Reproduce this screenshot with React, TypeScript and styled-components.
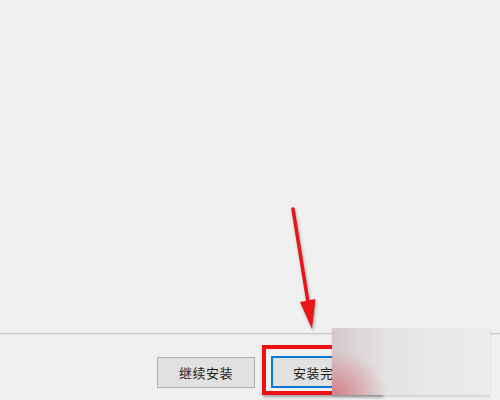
import React from 'react';
import styled, { createGlobalStyle } from 'styled-components';

const GlobalStyle = createGlobalStyle`
  html, body {
    margin: 0;
    padding: 0;
    background: #f0f0f0;
  }
  body {
    font-family: "Microsoft YaHei", "Noto Sans CJK SC", "Noto Sans", sans-serif;
  }
`;

const Dialog = styled.div`
  position: relative;
  width: 500px;
  height: 400px;
  display: flex;
  flex-direction: column;
  background: #f0f0f0;
  overflow: hidden;
`;

const Body = styled.div`
  height: 333px;
`;

const Divider = styled.div`
  height: 1px;
  background: #c9c9c9;
  border-bottom: 1px solid #e4e4e4;
`;

const Footer = styled.div`
  display: flex;
  align-items: flex-start;
  gap: 16px;
  padding: 22px 0 0 157px;
`;

const Button = styled.button<{ $primary?: boolean }>`
  box-sizing: border-box;
  width: 98px;
  height: ${({ $primary }) => ($primary ? '32px' : '31px')};
  margin-top: ${({ $primary }) => ($primary ? '-1px' : '0')};
  background: #e1e1e1;
  border: ${({ $primary }) => ($primary ? '2px solid #0a78d4' : '1px solid #adadad')};
  color: #1c1c1c;
  font-family: inherit;
  font-size: 13px;
  letter-spacing: 0.5px;
  padding: 0;
`;

// annotation layer: red highlight box, arrow, blurred patch
const Highlight = styled.div`
  position: absolute;
  left: 262px;
  top: 345px;
  width: 120px;
  height: 50px;
  box-sizing: border-box;
  border: 4px solid #ee1111;
  box-shadow: 1px 2px 3px rgba(0, 0, 0, 0.35);
`;

const Arrow = styled.svg`
  position: absolute;
  left: 0;
  top: 0;
  width: 500px;
  height: 400px;
  pointer-events: none;
  filter: drop-shadow(1px 2px 1.5px rgba(0, 0, 0, 0.3));
`;

const Smudge = styled.div`
  position: absolute;
  left: 332px;
  top: 328px;
  width: 158px;
  height: 67px;
  background:
    radial-gradient(ellipse 55px 45px at 0% 100%, rgba(208, 110, 120, 0.8), rgba(208, 110, 120, 0) 100%),
    linear-gradient(to right, #d5c8cb 0%, #ddd4d6 15%, #e4e2e2 35%, #e8e8e8 60%, #ececec 100%);
  box-shadow: 0 2px 2px rgba(0, 0, 0, 0.12);
`;

export default function App() {
  return (
    <>
      <GlobalStyle />
      <Dialog>
        <Body />
        <Divider />
        <Footer>
          <Button>继续安装</Button>
          <Button $primary>安装完成</Button>
        </Footer>
        <Highlight />
        <Arrow viewBox="0 0 500 400">
          <line x1="293" y1="209" x2="308" y2="302" stroke="#e81418" strokeWidth="3.5" strokeLinecap="round" />
          <polygon points="300,302 315.5,299 312,329" fill="#e81418" />
        </Arrow>
        <Smudge />
      </Dialog>
    </>
  );
}
